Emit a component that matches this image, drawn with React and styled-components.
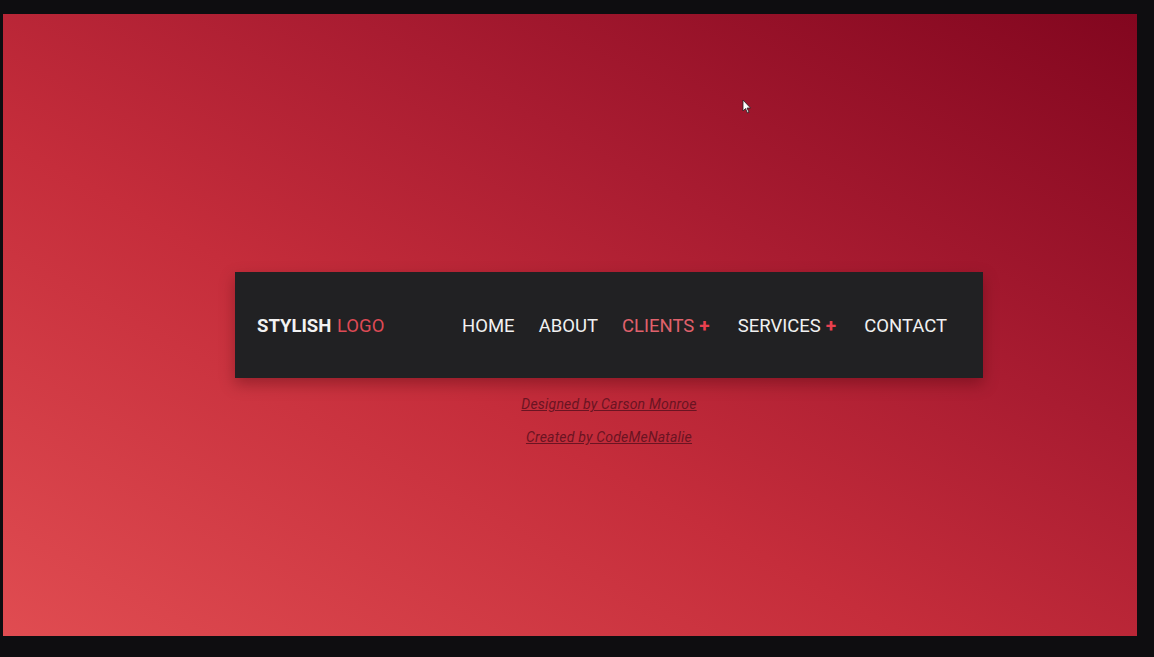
import React from "react";
import styled, { createGlobalStyle } from "styled-components";

const Global = createGlobalStyle`
  html, body { margin: 0; padding: 0; background: #0e0d10; }
  body { font-family: Roboto, "Liberation Sans", sans-serif; }
`;

const Frame = styled.div`
  width: 1154px;
  height: 657px;
  box-sizing: border-box;
  padding: 14px 17px 21px 3px;
  background: #0e0d10;
`;

const Stage = styled.div`
  position: relative;
  height: 100%;
  background: linear-gradient(to top right, #e04c51 0%, #c52d3b 40%, #a91c31 65%, #82061f 100%);
  display: flex;
  flex-direction: column;
  align-items: center;
  padding-top: 258px;
  padding-left: 78px;
  box-sizing: border-box;
`;

const Nav = styled.nav`
  width: 748px;
  height: 106px;
  box-sizing: border-box;
  background: #212123;
  display: flex;
  align-items: center;
  justify-content: space-between;
  padding: 2px 36px 0 22px;
  box-shadow: 0 6px 14px rgba(60, 0, 10, 0.35);
`;

const Logo = styled.div`
  font-size: 18.5px;
  font-weight: 700;
  color: #f2f2f2;
  span { color: #de4a55; font-weight: 400; margin-left: 1px; }
`;

const Menu = styled.ul`
  list-style: none;
  margin: 0;
  padding: 0;
  display: flex;
  align-items: center;
  gap: 24px;
`;

const Item = styled.li`
  font-size: 18.5px;
  font-weight: 400;
  color: ${p => (p.$active ? "#e0616c" : "#f1f1f1")};
  display: flex;
  align-items: center;
  margin-left: ${p => (p.$wide ? "4px" : "0")};
`;

const Plus = styled.span`
  color: #e8404f;
  font-weight: 700;
  font-size: 19px;
  margin-left: 5px;
  position: relative;
  top: -1px;
`;

const Credits = styled.div`
  margin-top: 17px;
  display: flex;
  flex-direction: column;
  align-items: center;
  gap: 15px;
`;

const Credit = styled.a`
  font-size: 14px;
  font-style: italic;
  color: #6a1422;
  text-decoration: underline;
  line-height: 18px;
  letter-spacing: 0.2px;
`;

const Cursor = styled.svg`
  position: absolute;
  left: 739px;
  top: 85px;
`;

export default function App() {
  return (
    <Frame>
      <Global />
      <Stage>
        <Nav>
          <Logo>STYLISH <span>LOGO</span></Logo>
          <Menu>
            <Item>HOME</Item>
            <Item>ABOUT</Item>
            <Item $active>CLIENTS<Plus>+</Plus></Item>
            <Item $wide>SERVICES<Plus>+</Plus></Item>
            <Item $wide>CONTACT</Item>
          </Menu>
        </Nav>
        <Credits>
          <Credit>Designed by Carson Monroe</Credit>
          <Credit>Created by CodeMeNatalie</Credit>
        </Credits>
        <Cursor width="10" height="15" viewBox="0 0 10 15">
          <path d="M1 1 L1 12 L3.5 9.5 L5.5 14 L7 13.3 L5 9 L8.5 9 Z" fill="#fff" stroke="#222" strokeWidth="0.8" />
        </Cursor>
      </Stage>
    </Frame>
  );
}
